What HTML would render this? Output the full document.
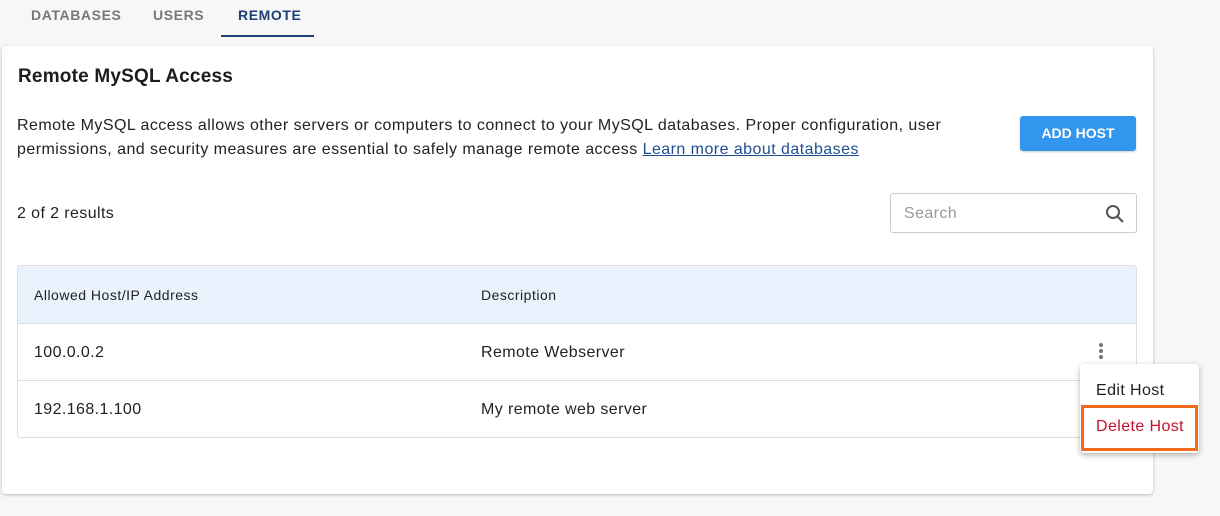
<!DOCTYPE html>
<html><head><style>
*{box-sizing:border-box;margin:0;padding:0}
body{width:1220px;height:516px;background:#f7f7f7;font-family:"Liberation Sans",sans-serif;color:#222;position:relative;overflow:hidden;letter-spacing:.4px}
.tab{position:absolute;top:7px;font-size:14px;font-weight:bold;letter-spacing:.6px;color:#777}
.card{position:absolute;left:2px;top:46px;width:1151px;height:448px;background:#fff;border-radius:4px;box-shadow:0 1px 3px rgba(0,0,0,.25)}
.abs{position:absolute}
</style></head><body>
<div class="tab" style="left:31px">DATABASES</div>
<div class="tab" style="left:153px">USERS</div>
<div class="tab" style="left:238px;color:#1d3f75">REMOTE</div>
<div class="abs" style="left:221px;top:35px;width:93px;height:2px;background:#1d3f75"></div>
<div class="card">
<div class="abs" style="left:16px;top:20px;font-size:19px;font-weight:bold;color:#1c1c1c;letter-spacing:.2px">Remote MySQL Access</div>
<div class="abs" style="left:15px;top:68px;width:960px;font-size:16px;line-height:24px;color:#222;letter-spacing:.45px">Remote MySQL access allows other servers or computers to connect to your MySQL databases. Proper configuration, user permissions, and security measures are essential to safely manage remote access <span style="color:#1d4f8f;text-decoration:underline">Learn more about databases</span></div>
<div class="abs" style="left:1018px;top:70px;width:116px;height:35px;background:#3396ee;border-radius:3px;color:#fff;font-weight:bold;font-size:14px;text-align:center;line-height:35px;box-shadow:0 1px 2px rgba(0,0,0,.2);letter-spacing:0">ADD HOST</div>
<div class="abs" style="left:15px;top:159px;font-size:16px">2 of 2 results</div>
<div class="abs" style="left:888px;top:147px;width:247px;height:40px;border:1px solid #ccc;border-radius:3px;font-size:16px;color:#999;padding:11px 13px">Search
<svg class="abs" style="right:10px;top:9px" width="22" height="22" viewBox="0 0 22 22"><circle cx="9" cy="9" r="6" fill="none" stroke="#555" stroke-width="2"/><line x1="13.5" y1="13.5" x2="19" y2="19" stroke="#555" stroke-width="2.2"/></svg></div>
<div class="abs" style="left:15px;top:219px;width:1120px;height:173px;border:1px solid #ddd;border-radius:3px;overflow:hidden">
<div class="abs" style="left:0;top:0;width:100%;height:58px;background:#eaf2fd;border-bottom:1px solid #ddd"></div>
<div class="abs" style="left:16px;top:21px;font-size:14px;letter-spacing:.5px">Allowed Host/IP Address</div>
<div class="abs" style="left:463px;top:21px;font-size:14px;letter-spacing:.5px">Description</div>
<div class="abs" style="left:16px;top:78px;font-size:16px">100.0.0.2</div>
<div class="abs" style="left:463px;top:78px;font-size:16px">Remote Webserver</div>
<div class="abs" style="left:0;top:114px;width:100%;height:1px;background:#ddd"></div>
<div class="abs" style="left:16px;top:135px;font-size:16px">192.168.1.100</div>
<div class="abs" style="left:463px;top:135px;font-size:16px">My remote web server</div>
<div class="abs" style="left:1081px;top:77px;width:4px">
<div style="width:4px;height:4px;border-radius:2px;background:#777;margin-bottom:2px"></div>
<div style="width:4px;height:4px;border-radius:2px;background:#777;margin-bottom:2px"></div>
<div style="width:4px;height:4px;border-radius:2px;background:#777"></div></div>
</div>
</div>
<div class="abs" style="left:1080px;top:364px;width:119px;height:89px;background:#fff;border-radius:4px;box-shadow:0 2px 6px rgba(0,0,0,.3)"></div>
<div class="abs" style="left:1096px;top:382px;font-size:16px;color:#222">Edit Host</div>
<div class="abs" style="left:1081px;top:405px;width:117px;height:46px;border:3px solid #f26b1d"></div>
<div class="abs" style="left:1096px;top:418px;font-size:16px;color:#c8102e">Delete Host</div>
</body></html>
